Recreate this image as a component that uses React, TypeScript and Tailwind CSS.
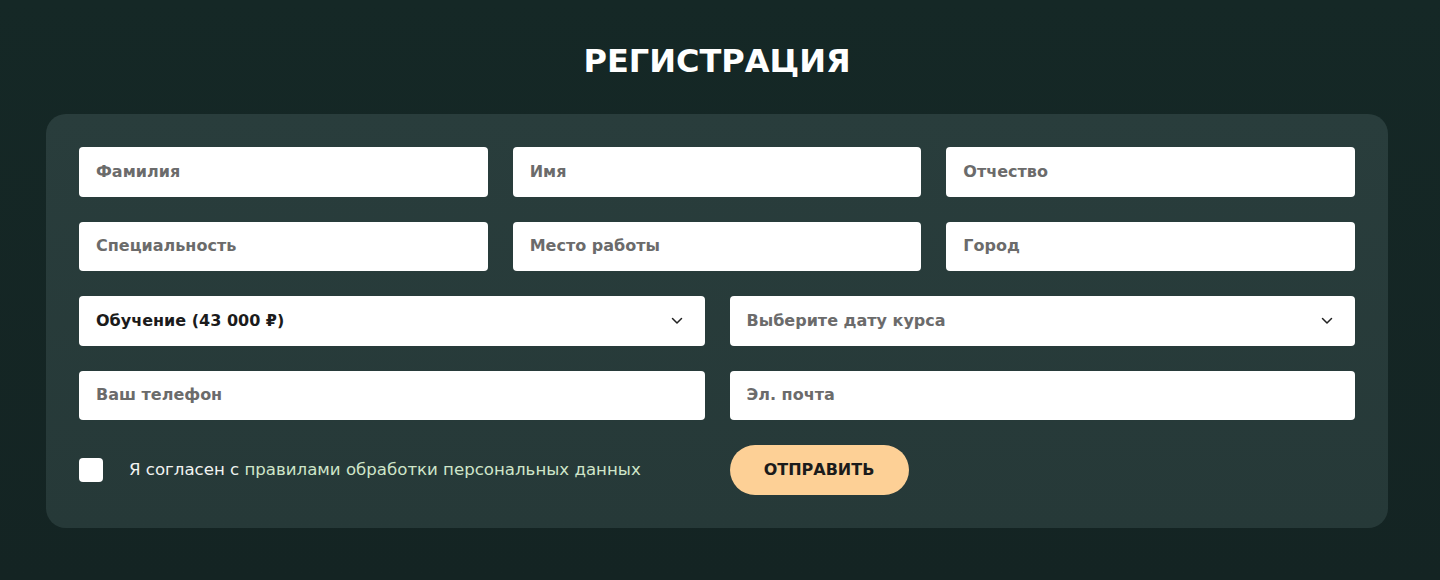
import React from "react";

const font = { fontFamily: '"DejaVu Sans", "Noto Sans", sans-serif' };

function Field({ label, dark }: { label: string; dark?: boolean }) {
  return (
    <div
      className={`flex h-[49.5px] items-center rounded-[4px] bg-white px-[17px] text-[16px] font-bold ${
        dark ? "text-[#1b1b1b]" : "text-[#6b6b6b]"
      }`}
    >
      {label}
    </div>
  );
}

function SelectField({ label, dark }: { label: string; dark?: boolean }) {
  return (
    <div
      className={`flex h-[49.5px] items-center justify-between rounded-[4px] bg-white pl-[17px] pr-[22px] text-[16px] font-bold ${
        dark ? "text-[#1b1b1b]" : "text-[#6b6b6b]"
      }`}
    >
      <span>{label}</span>
      <svg width="12" height="8" viewBox="0 0 12 8" fill="none">
        <path d="M1.5 1.5L6 6L10.5 1.5" stroke="#222" strokeWidth="1.5" strokeLinecap="round" strokeLinejoin="round" />
      </svg>
    </div>
  );
}

export default function App() {
  return (
    <div
      className="min-h-[580px] w-full bg-[linear-gradient(180deg,#152826_0%,#142423_100%)] pt-[40px]"
      style={font}
    >
      <h1 className="pr-[6px] text-center text-[32px] font-bold leading-[42px] text-white">
        РЕГИСТРАЦИЯ
      </h1>
      <div className="ml-[46px] mr-[52px] mt-[32px] rounded-[20px] bg-[linear-gradient(180deg,#293d3c_0%,#263938_100%)] p-[33px]">
        <div className="grid grid-cols-3 gap-[25px]">
          <Field label="Фамилия" />
          <Field label="Имя" />
          <Field label="Отчество" />
          <Field label="Специальность" />
          <Field label="Место работы" />
          <Field label="Город" />
        </div>
        <div className="mt-[25px] grid grid-cols-2 gap-[25px]">
          <SelectField label="Обучение (43 000 ₽)" dark />
          <SelectField label="Выберите дату курса" />
          <Field label="Ваш телефон" />
          <Field label="Эл. почта" />
          <div className="flex items-center">
            <div className="h-[24px] w-[24px] rounded-[4px] bg-white" />
            <span className="ml-[26px] text-[16.6px] font-medium text-[#f1f3f1]">
              Я согласен с <span className="text-[#cfe5c9]">правилами обработки персональных данных</span>
            </span>
          </div>
          <div className="flex items-center">
            <button className="h-[50px] w-[179px] rounded-full bg-[#fdd096] text-[16px] font-bold text-[#1b1b1b]">
              ОТПРАВИТЬ
            </button>
          </div>
        </div>
      </div>
    </div>
  );
}
